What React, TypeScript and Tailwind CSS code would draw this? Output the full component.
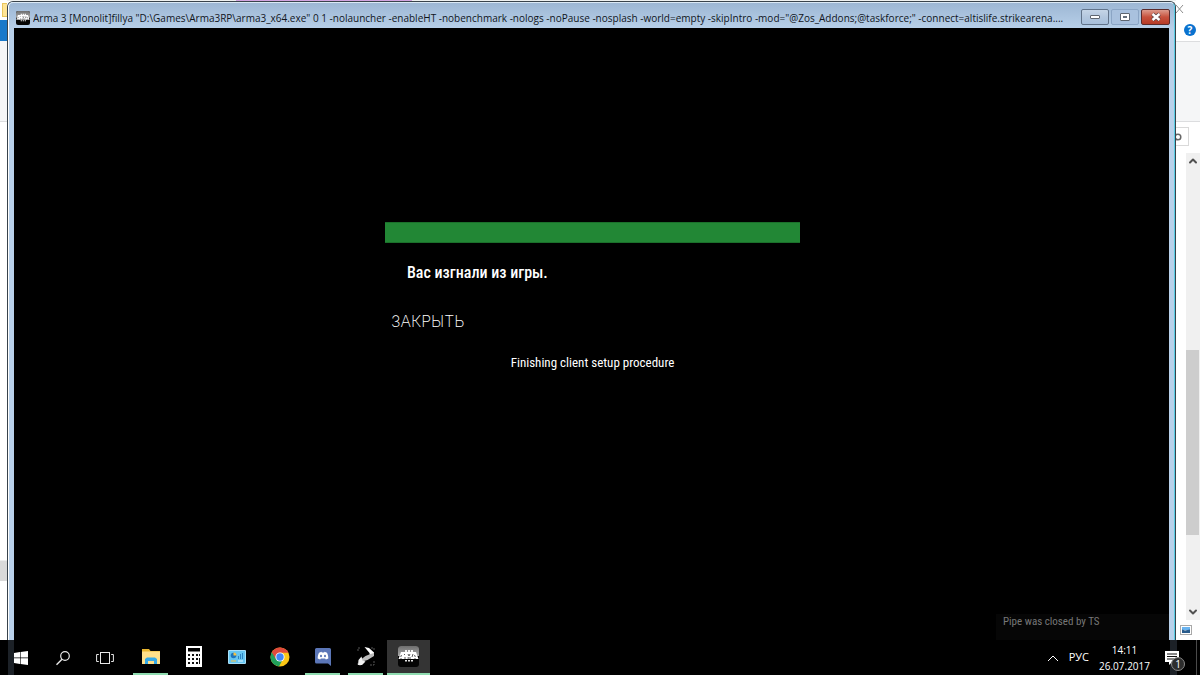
import type { ReactNode } from 'react'
import { ChevronDown, ChevronUp } from 'lucide-react'

const TITLE =
	'Arma 3 [Monolit]fillya "D:\\Games\\Arma3RP\\arma3_x64.exe" 0 1 -nolauncher -enableHT -nobenchmark -nologs -noPause -nosplash -world=empty -skipIntro -mod="@Zos_Addons;@taskforce;" -connect=altislife.strikearena....'

function ArmaIcon({ className }: { className: string }) {
	return (
		<svg viewBox="0 0 21 21" className={className} aria-hidden="true">
			<defs>
				<linearGradient id="armaTop" x1="0" y1="0" x2="0" y2="1">
					<stop offset="0" stopColor="#6f6f6f" />
					<stop offset="1" stopColor="#a8a8a8" />
				</linearGradient>
			</defs>
			<rect width="21" height="21" rx="3" fill="#050505" />
			<path d="M3 0h15a3 3 0 0 1 3 3v7H0V3a3 3 0 0 1 3-3z" fill="url(#armaTop)" />
			<path d="M7 4h2v2H7zM10 4h2v2h-2zM13 4h2v2h-2z" fill="#f3f3f3" />
			<path d="M3 6h15l2.500 7h-20z" fill="#fff" />
			<path
				d="M3.500 9l-.8 2M6.500 8v1M7 11v2M10 8l1 2 1-2M10.200 11v2M12 11v2M15 8l-1 3M16.500 9l.8 2M17 12v1M3 12v1"
				fill="none"
				stroke="#333"
				strokeWidth=".8"
			/>
			<path d="M7 14h2v1.500H7zM10 14h2v1.500h-2zM13 14h2v1.500h-2z" fill="#e5e5e5" />
		</svg>
	)
}

function WindowsIcon() {
	return (
		<svg viewBox="0 0 14 14" className="h-[14px] w-[14px]" aria-hidden="true">
			<path d="M0 2l6-1v5.6H0zM6.6.9L14 0v6.6H6.6zM0 7.3h6V13l-6-1zM6.6 7.3H14V14l-7.4-1z" fill="#fff" />
		</svg>
	)
}

function SearchIcon() {
	return (
		<svg viewBox="0 0 16 16" className="h-4 w-4" fill="none" stroke="#e8e8e8" aria-hidden="true">
			<circle cx="10" cy="6" r="4.3" strokeWidth="1.2" />
			<path d="M7 9.2L1.5 14.7" strokeWidth="1.4" />
		</svg>
	)
}

function TaskViewIcon() {
	return (
		<svg viewBox="0 0 18 14" className="h-[14px] w-[18px]" fill="none" stroke="#e8e8e8" aria-hidden="true">
			<rect x="4.5" y="1.5" width="9" height="11" />
			<path d="M2.8 3.5H.6v7h2.2M15.2 3.5h2.2v7h-2.2" />
		</svg>
	)
}

function FolderIcon() {
	return (
		<svg viewBox="0 0 20 17" className="h-[17px] w-5" aria-hidden="true">
			<path d="M1 1h7l1.5 2H19v13H1z" fill="#e9b62f" />
			<path d="M1 3.5h18V16H1z" fill="#ffe08a" />
			<path d="M4 16v-5l2-1.5h8l2 1.5v5h-3v-3H7v3z" fill="#35a9e6" />
		</svg>
	)
}

function CalculatorIcon() {
	return (
		<svg viewBox="0 0 16 21" className="h-[21px] w-4" aria-hidden="true">
			<rect width="16" height="21" fill="#fff" />
			<rect x="2" y="2" width="12" height="3.5" fill="#000" />
			<path
				d="M2 8h2v2H2zM6 8h2v2H6zM10 8h2v2h-2zM2 12h2v2H2zM6 12h2v2H6zM10 12h2v2h-2zM2 16h2v2H2zM6 16h2v2H6zM10 16h2v2h-2zM13 8h1v2h-1zM13 12h1v6h-1z"
				fill="#111"
			/>
		</svg>
	)
}

function ControlPanelIcon() {
	return (
		<svg viewBox="0 0 18 14" className="h-[14px] w-[18px]" aria-hidden="true">
			<rect width="18" height="14" rx="1" fill="#a8e0fa" />
			<rect x="1" y="1" width="16" height="12" fill="#66c6f2" />
			<circle cx="5.5" cy="5.5" r="2.800" fill="#1d75bd" />
			<path d="M5.5 5.5v-3a3 3 0 0 1 3 3z" fill="#f6c243" />
			<path d="M10.5 6v3M12.5 4v5M14.5 3v6" stroke="#2b83c4" />
			<path d="M3 11h5" stroke="#f6c243" />
			<path d="M10 11h5" stroke="#e6f7ff" />
		</svg>
	)
}

function ChromeIcon() {
	return (
		<svg viewBox="0 0 20 20" className="h-5 w-5" aria-hidden="true">
			<circle cx="10" cy="10" r="9.5" fill="#fbc716" />
			<path d="M10 10L1.8 5.2A9.5 9.5 0 0 0 9 19.5l4-7.5z" fill="#1fa05a" />
			<path d="M10 10L5.8 12 1.8 5.2A9.5 9.5 0 0 1 18.5 5.8H10z" fill="#e04a3c" />
			<circle cx="10" cy="10" r="4.6" fill="#fff" />
			<circle cx="10" cy="10" r="3.7" fill="#4285f4" />
		</svg>
	)
}

function DiscordIcon() {
	return (
		<svg viewBox="0 0 16 18" className="h-[18px] w-4" aria-hidden="true">
			<path d="M1.5 0h13A1.5 1.5 0 0 1 16 1.5V18l-3-2.5H1.5A1.5 1.5 0 0 1 0 14V1.5A1.5 1.5 0 0 1 1.5 0z" fill="#5b76b7" />
			<path d="M4 4.7l2.5-.9.4.7h2.2l.4-.7 2.5.9c1 2 1.4 4 1.3 5.8l-2.4 1-.8-1.1H5.900l-.8 1.100-2.400-1C2.600 8.700 3 6.700 4 4.700z" fill="#fff" />
			<ellipse cx="6" cy="8" rx="1" ry="1.200" fill="#5b76b7" />
			<ellipse cx="10" cy="8" rx="1" ry="1.200" fill="#5b76b7" />
		</svg>
	)
}

function LauncherIcon() {
	return (
		<svg viewBox="0 0 18 19" className="h-[19px] w-[18px]" aria-hidden="true">
			<path d="M1 4V1h3M14 1h3v2M17 14v4h-4M4 18H1v-3" fill="none" stroke="#555" strokeDasharray="2 1" />
			<path d="M7.500 0L12 1l5 4.500v3L13 10l-.5-4z" fill="#fff" />
			<path d="M17 6v3l-6.500 4-5 1.500-1-2.500 4-3 5-2z" fill="#bdbdbd" />
			<path d="M1.500 13l3-3.500 1 4 3 1-3.500 3.500H1z" fill="#f1f1f1" />
		</svg>
	)
}

function ActionCenterIcon() {
	return (
		<svg viewBox="0 0 14 14" className="h-[14px] w-[14px]" aria-hidden="true">
			<path d="M0 0h14v11H7l-3 3v-3H0z" fill="#fff" />
			<path d="M2 3h10M2 5.500h10M2 8h7" stroke="#111" />
		</svg>
	)
}

type TaskProps = { label: string; running?: boolean; active?: boolean; children: ReactNode }

function TaskButton({ label, running, active, children }: TaskProps) {
	return (
		<button
			aria-label={label}
			className={`flex h-full w-[43px] shrink-0 flex-col items-center ${active ? 'bg-[#343434]' : 'px-1'}`}
		>
			<span className="flex flex-1 items-center justify-center">{children}</span>
			<span className={`h-[2px] w-full shrink-0 ${running ? 'bg-[#8fdcb0]' : ''}`} />
		</button>
	)
}

// Slivers of the explorer window that show on either side of the game
function ExplorerLeft() {
	return (
		<div className="flex w-[7px] shrink-0 flex-col bg-white">
			<div className="flex h-5 justify-end py-[3px]">
				<div className="w-[5px] border border-r-0 border-[#e9c65e] bg-[#ffe596]" />
			</div>
			<div className="h-[21px] bg-[#1979ca]" />
			<div className="h-[81px] border-b border-[#dcdddf] bg-[#f5f6f7]" />
			<div className="flex-1" />
			<div className="mb-[59px] h-[21px] border-t border-[#ececec] bg-[#d9d9d9]" />
		</div>
	)
}

function ExplorerRight() {
	return (
		<div className="flex w-6 shrink-0 flex-col bg-white">
			<div className="flex h-[41px] flex-col">
				<svg viewBox="0 0 8 10" className="mt-1 h-[10px] w-2" stroke="#8d8d8d" aria-hidden="true">
					<path d="M0 1l7 8M7 1L0 9" />
				</svg>
				<button
					aria-label="Help"
					className="mt-[10px] ml-2 flex h-3 w-3 items-center justify-center rounded-full bg-[#0a72cf] font-['Open_Sans',sans-serif] text-[10px] leading-3 font-bold text-white"
				>
					?
				</button>
			</div>
			<div className="h-[81px] border-y border-[#dcdddf] bg-[#f5f6f7]" />
			<div className="mt-[5px] flex h-[19px] w-[13px] items-center border border-l-0 border-[#d9d9d9]">
				<svg viewBox="0 0 6 8" className="h-2 w-[6px]" fill="none" stroke="#666" strokeWidth="1.5" aria-hidden="true">
					<circle cx="2" cy="4" r="2.800" />
				</svg>
			</div>
			<div className="mt-[7px] ml-[10px] flex flex-1 flex-col items-center bg-[#f0f0f0]">
				<ChevronUp className="mt-[2px] h-3 w-3 text-[#505050]" strokeWidth={4} />
				<div className="flex w-full flex-1 flex-col pr-px">
					<div className="flex-[183]" />
					<div className="flex-[184] bg-[#cdcdcd]" />
					<div className="flex-[71]" />
				</div>
				<ChevronDown className="mb-[2px] h-3 w-3 text-[#505050]" strokeWidth={4} />
			</div>
			<div className="flex h-5 items-center pl-1">
				<svg viewBox="0 0 12 10" className="h-[10px] w-3" aria-hidden="true">
					<rect x=".5" y=".5" width="11" height="9" fill="#fff" stroke="#a9a9a9" />
					<path d="M2 2h8v3H2z" fill="#6ab4f0" />
					<path d="M2 4.500l3 1 5-1V8H2z" fill="#285b8c" />
				</svg>
			</div>
		</div>
	)
}

function CaptionButtons() {
	return (
		<div className="flex shrink-0 gap-[2px] pt-[6px]">
			<button
				aria-label="Minimize"
				className="flex h-4 w-7 items-center justify-center rounded-xs border border-[#61738a] bg-linear-to-b from-[#c5d5e7] via-[#b3c7de] to-[#a8c0dc]"
			>
				<span className="h-1 w-[10px] rounded-[1px] border border-[#5e6670] bg-white" />
			</button>
			<button
				aria-label="Maximize"
				className="flex h-4 w-7 items-center justify-center rounded-xs border border-[#8ba5c5] bg-[#a9c1de]"
			>
				<span className="flex h-2 w-[10px] items-center justify-center rounded-[1px] border border-[#5e6670] bg-white">
					<span className="h-[2px] w-1 bg-[#66707c]" />
				</span>
			</button>
			<button
				aria-label="Close window"
				className="flex h-4 w-[29px] items-center justify-center rounded-xs border border-[#5b2b2c] bg-linear-to-b from-[#dc9a8c] via-[#c7513d] to-[#b53a26]"
			>
				<svg viewBox="0 0 12 10" className="h-[10px] w-3" aria-hidden="true">
					<path d="M2.500 2l7 6M9.500 2l-7 6" stroke="#5d4747" strokeWidth="4" />
					<path d="M2.500 2l7 6M9.500 2l-7 6" stroke="#fff" strokeWidth="2.400" />
				</svg>
			</button>
		</div>
	)
}

function GameWindow() {
	return (
		<div className="flex min-w-0 flex-1 flex-col">
			<div className="flex h-px shrink-0 bg-[#eef0ef]">
				<div className="ml-[229px] w-44 bg-[#d3a5e0]" />
			</div>
			<div className="flex min-h-0 flex-1 flex-col rounded-t-md border border-b-0 border-[#39434b] bg-[#b9d1ea]">
				<div className="flex min-h-0 flex-1 flex-col rounded-t-[5px] border-t border-r border-l border-t-[#dbe9f5] border-r-[#59cde4] border-l-white bg-linear-to-b from-[#9db7d4] to-[#b9d1ea] to-[27px] px-[5px]">
					<header className="-mr-px flex h-[25px] shrink-0 gap-[3px] pl-[2px]">
						<ArmaIcon className="mt-2 h-[14px] w-[14px] shrink-0" />
						<h1 className="min-w-0 flex-1 overflow-hidden pt-[7px] font-['Open_Sans','Noto_Sans',sans-serif] text-[10px] leading-4 whitespace-nowrap text-[#10151c]">
							{TITLE}
						</h1>
						<CaptionButtons />
					</header>
					<main className="flex flex-1 flex-col bg-black pl-[2px] font-['Roboto_Condensed',Roboto,sans-serif] text-white">
						<div className="mx-auto flex w-[415px] max-w-full flex-col pt-[194px]">
							<div className="h-[21px] border-y border-[#1b702b] bg-[#228735]" />
							<p className="mt-5 pl-[22px] text-base leading-5 font-medium">Вас изгнали из игры.</p>
							<button className="mt-7 self-start pl-[6px] font-['Inter',sans-serif] text-base leading-5 font-extralight">
								ЗАКРЫТЬ
							</button>
							<p className="mt-[22px] text-center text-[13px] leading-5">Finishing client setup procedure</p>
						</div>
						<p className="mt-auto h-[26px] w-[173px] self-end bg-[#060606] pl-[7px] text-[11px] leading-4 text-[#777]">
							Pipe was closed by TS
						</p>
					</main>
				</div>
			</div>
		</div>
	)
}

function Taskbar() {
	return (
		<footer className="flex h-[35px] shrink-0 bg-black font-['Open_Sans','Noto_Sans',sans-serif] text-white">
			<div className="ml-2 w-[6px] shrink-0 bg-[#1c2127]" />
			<nav className="flex">
				<button aria-label="Start" className="flex w-7 items-center">
					<WindowsIcon />
				</button>
				<button aria-label="Search" className="flex w-[42px] items-center justify-center">
					<SearchIcon />
				</button>
				<button aria-label="Task view" className="mr-[3px] flex w-[42px] items-center justify-center">
					<TaskViewIcon />
				</button>
				<TaskButton label="File Explorer" running><FolderIcon /></TaskButton>
				<TaskButton label="Calculator"><CalculatorIcon /></TaskButton>
				<TaskButton label="Control Panel"><ControlPanelIcon /></TaskButton>
				<TaskButton label="Chrome"><ChromeIcon /></TaskButton>
				<TaskButton label="Discord" running><DiscordIcon /></TaskButton>
				<TaskButton label="Arma 3 Launcher" running><LauncherIcon /></TaskButton>
				<TaskButton label="Arma 3" running active><ArmaIcon className="h-[21px] w-[21px]" /></TaskButton>
			</nav>
			<div className="ml-auto flex items-center">
				<button aria-label="Show hidden icons" className="px-2">
					<svg viewBox="0 0 12 8" className="h-2 w-3" fill="none" stroke="#fff" aria-hidden="true">
						<path d="M1 7l5-5 5 5" />
					</svg>
				</button>
				<button className="px-[2px] text-[11px]">РУС</button>
				<time dateTime="2017-07-26T14:11" className="flex flex-col px-2 text-center text-[10px] leading-4">
					<span>14:11</span>
					<span>26.07.2017</span>
				</time>
				<div className="ml-3 w-[7px] self-stretch bg-[#1c2127]" />
				<button aria-label="Notifications" className="relative -ml-3 mr-[17px]">
					<ActionCenterIcon />
					<span className="absolute top-[6px] left-[6px] flex h-[14px] w-[14px] items-center justify-center rounded-full border border-[#8a8a8a] bg-[#2d2d2d] text-[10px] leading-3">
						1
					</span>
				</button>
				<div className="mr-[3px] w-px self-stretch bg-[#4a4a4a]" />
			</div>
		</footer>
	)
}

export default function App() {
	return (
		<div className="flex h-screen flex-col overflow-hidden bg-white">
			<div className="flex min-h-0 flex-1">
				<ExplorerLeft />
				<GameWindow />
				<ExplorerRight />
			</div>
			<Taskbar />
		</div>
	)
}
